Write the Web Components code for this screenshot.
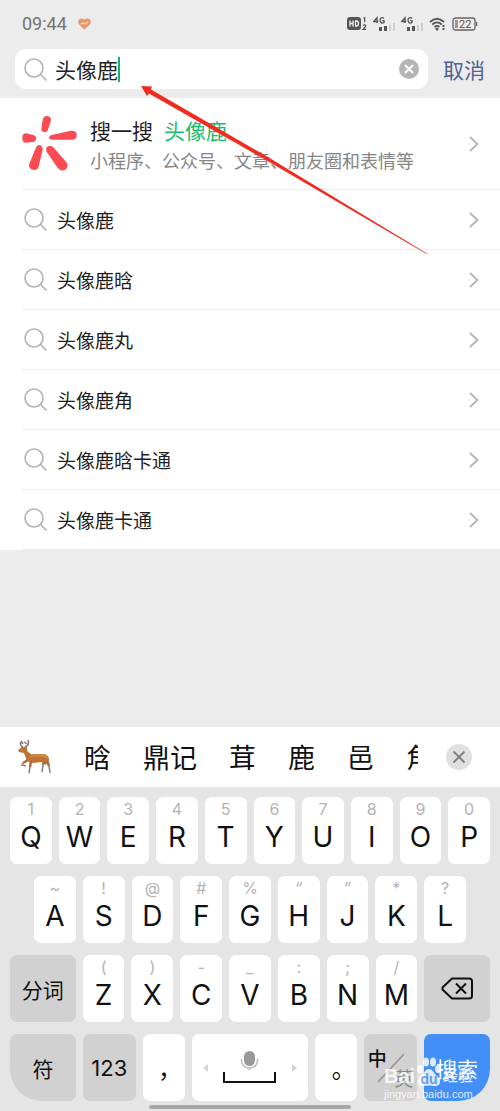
<!DOCTYPE html>
<html lang="zh-CN">
<head>
<meta charset="utf-8">
<meta name="viewport" content="width=device-width, initial-scale=1">
<title>搜一搜</title>
<style>
  html, body { margin: 0; }
  body { font-family: "Noto Sans CJK SC", sans-serif; color: #1f1f1f; background: #ececec; }
</style>
</head>
<body>
<phone-screen></phone-screen>
<script>
const reset = `
  *, *::before { box-sizing: border-box; }
  button { font: inherit; color: inherit; border: 0; padding: 0; margin: 0; background: none; }
  a { color: inherit; text-decoration: none; }
  svg { display: block; flex: none; }
`;

function define(name, css, html) {
  customElements.define(name, class extends HTMLElement {
    constructor() {
      super();
      this.attachShadow({ mode: 'open' });
    }
    connectedCallback() {
      const body = typeof html === 'function' ? html(this) : html;
      this.shadowRoot.innerHTML = `<style>${reset}${css}</style>${body}`;
    }
  });
}

define('status-bar', `
  :host { display: flex; align-items: center; justify-content: space-between; height: 48px; padding: 0 22px; color: #737373; font-family: Roboto, sans-serif; }
  .side { display: flex; align-items: center; gap: 11px; }
  time { font-size: 18px; line-height: 24px; }
  .signals { gap: 6px; }
`, `
  <div class="side">
    <time>09:44</time>
    <svg width="13" height="12" viewBox="0 0 13 12"><path d="M6.500 11.500L1.200 6.500C-2 2.500 3-1.500 6.500 1.800 10-1.500 15 2.500 11.800 6.500Z" fill="#e99572"/><path d="M3 6l2-1 2 1 3-2" fill="none" stroke="#ffe0a8" stroke-width="1.500"/></svg>
  </div>
  <div class="side signals">
    <svg width="20" height="16" viewBox="0 0 20 16"><rect x="0" y="1" width="14" height="13" rx="3" fill="#555"/><path d="M3 4.500v6M6 4.500v6M3 7.500h3M8.500 5v5h1q2 0 2-2.500t-2-2.500z" fill="none" stroke="#eee" stroke-width="1.300"/><path d="M16.500 2.500l1.200-.8v4.600M16 9.500q1.500-1.200 2.600-.2.600 1-2.500 4h3" fill="none" stroke="#555" stroke-width="1.200"/></svg>
    <svg width="22" height="16" viewBox="0 0 22 16"><path d="M4 7V1.700L.700 5.500h4.600M11 2.500Q9.500 1 8 2T7.400 5.500 11 6.500V4.700H9.300" fill="none" stroke="#555" stroke-width="1.300"/><path d="M6 11h3v4H6zM11 10h3v5h-3z" fill="#555"/><path d="M16 9h2v6h-2zM20 7h2v8h-2z" fill="#d0d0d0"/></svg>
    <svg width="22" height="16" viewBox="0 0 22 16"><path d="M4 7V1.700L.700 5.500h4.600M11 2.500Q9.500 1 8 2T7.400 5.500 11 6.500V4.700H9.300" fill="none" stroke="#555" stroke-width="1.300"/><path d="M6 11h3v4H6zM11 10h3v5h-3z" fill="#555"/><path d="M16 9h2v6h-2zM20 7h2v8h-2z" fill="#d0d0d0"/></svg>
    <svg width="17" height="14" viewBox="0 0 17 14"><path d="M1 5q7-6.500 14 0M3.300 7.500q4.700-4.300 9.400 0M5.500 10q2.500-2.200 5 0" fill="none" stroke="#555" stroke-width="1.800"/><circle cx="8" cy="12" r="1.500" fill="#555"/><path d="M14.500 8v2M14.500 11v2" stroke="#555" stroke-width="2"/></svg>
    <svg width="26" height="14" viewBox="0 0 26 14"><rect x="1" y="1" width="22" height="12" rx="2.500" fill="none" stroke="#666" stroke-width="1.300"/><path d="M24.500 5v4" stroke="#666" stroke-width="1.500"/><rect x="3" y="3" width="3" height="8" fill="#999"/><text x="7" y="11" font-family="Roboto, sans-serif" font-size="11" fill="#555">22</text></svg>
  </div>
`);

define('search-icon', `
  :host { display: block; }
`, `<svg width="23" height="23" viewBox="0 0 23 23" fill="none" stroke="#b4b4b4" stroke-width="1.600"><circle cx="10" cy="10" r="9"/><path d="M16.500 16.500l6 6"/></svg>`);

define('chevron-icon', `
  :host { display: block; }
`, `<svg width="10" height="16" viewBox="0 0 10 16" fill="none" stroke="#b5b5b5" stroke-width="1.800"><path d="M1 1l7.500 7L1 15"/></svg>`);

define('search-bar', `
  :host { display: flex; gap: 15px; padding: 1px 15px 9px; }
  .field { flex: 1; min-width: 0; height: 40px; display: flex; align-items: center; padding: 0 9px; border-radius: 11px; background: #fff; }
  search-icon { margin-right: 8px; }
  input { field-sizing: content; min-width: 0; height: 30px; padding: 0; border: 0; outline: 0; background: none; font: 21px/28px "Noto Sans CJK SC", sans-serif; color: #222; }
  .caret { width: 2px; height: 25px; background: #1aad6b; }
  .clear { margin-left: auto; }
  .cancel { font-size: 21px; line-height: 38px; height: 40px; color: #4f6195; }
`, `
  <div class="field">
    <search-icon></search-icon>
    <input type="text" value="头像鹿" aria-label="搜索">
    <span class="caret"></span>
    <button class="clear" aria-label="清除"><svg width="20" height="20" viewBox="0 0 20 20"><circle cx="10" cy="10" r="10" fill="#b5b5b5"/><path d="M6 6l8 8M14 6l-8 8" stroke="#fff" stroke-width="2"/></svg></button>
  </div>
  <button class="cancel">取消</button>
`);

define('sou-entry', `
  :host { display: block; padding-left: 22px; background: #fff; }
  a { display: flex; align-items: center; height: 92px; padding-right: 21px; border-bottom: 1px solid #ededed; }
  .text { flex: 1; min-width: 0; margin-left: 13px; padding-top: 2px; }
  .title { display: flex; gap: 11px; font-size: 21px; line-height: 30px; }
  em { font-style: normal; color: #1cbb6c; }
  .sub { font-size: 18px; line-height: 30px; color: #858585; white-space: nowrap; }
`, `
  <a href="#sou">
    <svg width="55" height="55" viewBox="0 0 55 55" fill="#fa4b53" stroke="#fa4b53" stroke-width="1.500" stroke-linejoin="round"><path d="M21.500 3Q23 0 26 1 29 2 28 5L25 14Q23 17 20 14Z"/><path d="M4 18Q1 18 1 22 1 26 4 26L12 25Q15 22 12 20Z"/><path d="M29 20L49 15.500Q54 15 54 19 54 23 50 23L30 23Q26 22 29 20Z"/><path d="M15 31Q19 28 20 33L16 50Q15 54 11 53 7 52 8 48Z"/><path d="M25 32Q28 29 31 32L44 47Q46 50 43 53 39 55 36 51L25 35Z"/></svg>
    <div class="text">
      <div class="title"><span>搜一搜</span><em>头像鹿</em></div>
      <div class="sub">小程序、公众号、文章、朋友圈和表情等</div>
    </div>
    <chevron-icon></chevron-icon>
  </a>
`);

define('suggest-row', `
  :host { display: block; padding-left: 22px; background: #fff; }
  a { display: flex; align-items: center; height: 60px; padding: 0 21px 0 2px; border-bottom: 1px solid #ededed; font-size: 19px; line-height: 28px; }
  .label { flex: 1; margin-left: 10px; }
`, `<a href="#suggest"><search-icon></search-icon><span class="label"><slot></slot></span><chevron-icon></chevron-icon></a>`);

define('candidate-bar', `
  :host { display: flex; align-items: center; height: 60px; padding: 0 28px 0 18px; background: #fff; color: #111; }
  .words { flex: 1; min-width: 0; display: flex; align-items: center; gap: 32px; overflow: hidden; font-size: 27px; line-height: 40px; white-space: nowrap; }
  .words button { flex: none; }
  .close { margin-left: 28px; }
`, `
  <div class="words">
    <button aria-label="鹿"><svg width="34" height="36" viewBox="0 0 34 36"><g fill="none" stroke="#85756f" stroke-width="1.500"><path d="M5 8Q1 6 3 3M5 5L3 2M7 8q5-2 3-7M9 5L6 3"/></g><path d="M0 11L4 8 9 8 9 12 13 15 26 15Q31 16 31 21L28 26 24 23 15 24 9 22 6 14 1 13Z" fill="#bd7335"/><path d="M13 15h13q4 2 4 5-8-4-18-1z" fill="#cf8744"/><path d="M10 21L5 24M13 22L12 28M26 22L25 26M29 21L31 27" fill="none" stroke="#aa6c3e" stroke-width="2.500"/><path d="M5 24l-1 2 4 1M12 28l-1 6M25 26l-1 7M31 27l1 7" fill="none" stroke="#92817b" stroke-width="1.600"/></svg></button>
    <button>晗</button><button>鼎记</button><button>茸</button><button>鹿</button><button>邑</button><button>角</button>
  </div>
  <button class="close" aria-label="关闭"><svg width="26" height="26" viewBox="0 0 26 26"><circle cx="13" cy="13" r="13" fill="#e0e0e0"/><path d="M7.500 7.500l11 11M18.500 7.500l-11 11" stroke="#808080" stroke-width="1.800"/></svg></button>
`);

define('key-cap', `
  :host { display: block; min-width: 0; --radius: 7px; }
  button { display: flex; flex-direction: column; align-items: center; justify-content: center; width: 100%; height: 67px; border-radius: var(--radius); background: #fff; color: #111; font-size: 21px; line-height: 30px; }
  .hint { font: 16px/20px Inter, sans-serif; color: #b3b3b3; }
  .letter { font: 28px/36px Inter, sans-serif; font-optical-sizing: none; }
  :host([hint]) button { justify-content: flex-start; padding-top: 2px; }
  :host([tone="gray"]) button { background: #d1d1d1; }
  :host([tone="blue"]) button { background: #428ff8; color: #fff; }
  :host([corner="left"]) { --radius: 7px 7px 7px 32px; }
  :host([corner="right"]) { --radius: 7px 7px 32px 7px; }
`, el => el.hasAttribute('hint')
  ? `<button><span class="hint">${el.getAttribute('hint')}</span><span class="letter"><slot></slot></span></button>`
  : `<button aria-label="${el.getAttribute('label') || el.textContent}"><slot></slot></button>`);

const keys = (letters, hints) =>
  [...letters].map((c, i) => `<key-cap hint="${hints[i]}">${c}</key-cap>`).join('');

define('key-board', `
  :host { display: flex; flex-direction: column; gap: 12px; padding: 10px 10px 2px; background: #e5e5e5; }
  .row { display: grid; gap: 7px; grid-auto-flow: column; grid-auto-columns: minmax(0, 1fr); }
  .second { padding: 0 24px; }
  .third { grid-template-columns: 66fr repeat(7, 42fr) 66fr; }
  .fourth { grid-template-columns: 66fr 53fr 42fr 117fr 42fr 53fr 66fr; }
  .num { font: 22px/30px Inter, sans-serif; }
  .mark { padding-top: 14px; font: 24px/30px "Noto Sans CJK TC", sans-serif; }
  .lang { display: grid; grid-template-columns: 18px 8px 20px; grid-template-rows: 20px 20px; font-size: 19px; line-height: 20px; }
  .lang b { grid-column: 1; grid-row: 1; font-weight: 500; }
  .lang span { grid-column: 3; grid-row: 2; color: #8a8a8a; }
  .lang svg { grid-column: 1 / 4; grid-row: 1 / 3; place-self: center; }
  .home { align-self: center; width: 42%; height: 4px; border-radius: 2px; background: #a8a8a8; margin-top: -8px; }
`, `
  <div class="row">${keys('QWERTYUIOP', '1234567890')}</div>
  <div class="row second">${keys('ASDFGHJKL', '~!@#%“”*?')}</div>
  <div class="row third"><key-cap tone="gray">分词</key-cap>${keys('ZXCVBNM', '()-_:;/')}<key-cap tone="gray" label="删除"><svg width="32" height="23" viewBox="0 0 32 23" fill="none" stroke="#111" stroke-width="2" stroke-linejoin="round"><path d="M11 1.500H28Q31 1.500 31 4V19Q31 21.500 28 21.500H11L1.500 12.500V10.500Z"/><path d="M15 6.500l10 10M25 6.500l-10 10"/></svg></key-cap></div>
  <div class="row fourth">
    <key-cap tone="gray" corner="left">符</key-cap>
    <key-cap tone="gray"><span class="num">123</span></key-cap>
    <key-cap><span class="mark" lang="zh-TW">，</span></key-cap>
    <key-cap label="空格"><svg width="96" height="36" viewBox="0 0 96 36"><path d="M6 14v8l-5-4zM90 14v8l5-4z" fill="#d4d4d4"/><rect x="42" y="1" width="11" height="15" rx="5.500" fill="#999"/><path d="M39.500 9v2q1 7 8 7t8-7V9M47.500 18v2" fill="none" stroke="#b8b8b8" stroke-width="1.500"/><path d="M22 22v10h51V22" fill="none" stroke="#111" stroke-width="2"/></svg></key-cap>
    <key-cap><span class="mark" lang="zh-TW">。</span></key-cap>
    <key-cap tone="gray" label="中英切换"><div class="lang"><b>中</b><svg width="28" height="30" viewBox="0 0 28 30"><path d="M1 29L27 1" stroke="#929292" stroke-width="1.500"/></svg><span>英</span></div></key-cap>
    <key-cap tone="blue" corner="right">搜索</key-cap>
  </div>
  <div class="home"></div>
`);

define('pointer-arrow', `
  :host { position: absolute; left: 141px; top: 85px; pointer-events: none; }
`, `<svg width="288" height="171" viewBox="0 0 288 171"><path d="M0 1L11 1.500 10 4.500 126 71.500 286 168.500 285.500 169 124 74.500 8 8.500 6 11Z" fill="#f22b20"/></svg>`);

define('water-mark', `
  :host { position: absolute; right: 27px; bottom: 10px; width: 89px; pointer-events: none; color: #fff; opacity: .82; }
  .brand { display: flex; align-items: center; justify-content: space-between; font: 700 20px/20px "Liberation Sans", "Noto Sans CJK SC", sans-serif; }
  .paw { display: grid; place-items: center; }
  .paw svg, .paw span { grid-area: 1 / 1; }
  .paw span { font-size: 14px; line-height: 16px; color: #6d9fdf; align-self: end; }
  .brand > span:first-child, .cn { padding-top: 8px; }
  .cn { font-size: 15px; font-weight: 500; }
  .site { font: 11px/14px "Liberation Sans", sans-serif; white-space: nowrap; }
`, `
  <div class="brand"><span>Bai</span><span class="paw"><svg width="26" height="30" viewBox="0 0 26 30" fill="#fff"><ellipse cx="4" cy="12" rx="3" ry="4"/><ellipse cx="10" cy="5" rx="3" ry="4.500"/><ellipse cx="17" cy="5" rx="3" ry="4.500"/><ellipse cx="22" cy="12" rx="3" ry="4"/><path d="M13 12C17 12 18 17 22 20 27 26 22 30 18 29Q13 28 8 29C2 30 0 25 4 20 8 17 9 12 13 12Z"/></svg><span>du</span></span><span class="cn">经验</span></div>
  <div class="site">jingyan.baidu.com</div>
`);

define('phone-screen', `
  :host { position: relative; display: flex; flex-direction: column; min-height: 100vh; overflow: hidden; background: #ececec; }
  main { flex: 1; }
`, `
  <status-bar></status-bar>
  <search-bar></search-bar>
  <main>
    <sou-entry></sou-entry>
    ${['头像鹿', '头像鹿晗', '头像鹿丸', '头像鹿角', '头像鹿晗卡通', '头像鹿卡通'].map(t => `<suggest-row>${t}</suggest-row>`).join('')}
  </main>
  <candidate-bar></candidate-bar>
  <key-board></key-board>
  <pointer-arrow></pointer-arrow>
  <water-mark></water-mark>
`);
</script>
</body>
</html>
